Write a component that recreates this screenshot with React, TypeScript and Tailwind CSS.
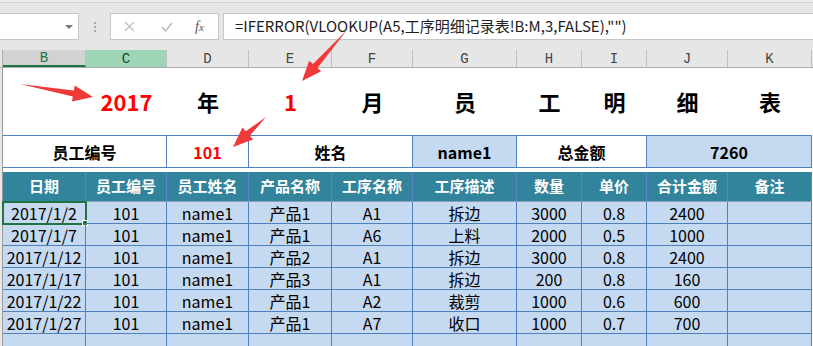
import type { FC } from 'react';

const cols = 'grid grid-cols-[83px_81px_82px_83px_81px_104px_65px_65px_81px_84px]';

const letters = ['B', 'C', 'D', 'E', 'F', 'G', 'H', 'I', 'J', 'K'];

const headers = ['日期', '员工编号', '员工姓名', '产品名称', '工序名称', '工序描述', '数量', '单价', '合计金额', '备注'];

const rows = [
  ['2017/1/2', '101', 'name1', '产品1', 'A1', '拆边', '3000', '0.8', '2400', ''],
  ['2017/1/7', '101', 'name1', '产品1', 'A6', '上料', '2000', '0.5', '1000', ''],
  ['2017/1/12', '101', 'name1', '产品2', 'A1', '拆边', '3000', '0.8', '2400', ''],
  ['2017/1/17', '101', 'name1', '产品3', 'A1', '拆边', '200', '0.8', '160', ''],
  ['2017/1/22', '101', 'name1', '产品1', 'A2', '裁剪', '1000', '0.6', '600', ''],
  ['2017/1/27', '101', 'name1', '产品1', 'A7', '收口', '1000', '0.7', '700', ''],
];

const title = [
  { t: '', red: false },
  { t: '2017', red: true },
  { t: '年', red: false },
  { t: '1', red: true },
  { t: '月', red: false },
  { t: '员', red: false },
  { t: '工', red: false },
  { t: '明', red: false },
  { t: '细', red: false },
  { t: '表', red: false },
];

// tapered arrow, like the ones a screenshot tool draws
const arrowPoints = (tx: number, ty: number, hx: number, hy: number) => {
  const len = Math.hypot(hx - tx, hy - ty);
  const dx = (hx - tx) / len;
  const dy = (hy - ty) / len;
  const nx = -dy;
  const ny = dx;
  const bx = hx - dx * 20;
  const by = hy - dy * 20;
  const pts = [
    [tx, ty],
    [bx + nx * 3, by + ny * 3],
    [bx + nx * 8, by + ny * 8],
    [hx, hy],
    [bx - nx * 8, by - ny * 8],
    [bx - nx * 3, by - ny * 3],
  ];
  return pts.map((p) => `${p[0].toFixed(1)},${p[1].toFixed(1)}`).join(' ');
};

const Arrows: FC = () => (
  <svg className="pointer-events-none absolute left-0 top-0" width={813} height={346}>
    <polygon points={arrowPoints(20, 84, 93, 97)} fill="#f03a3a" />
    <polygon points={arrowPoints(347, 30, 302, 81)} fill="#f03a3a" />
    <polygon points={arrowPoints(266, 117, 233, 147)} fill="#f03a3a" />
  </svg>
);

const Toolbar: FC = () => (
  <div className="h-[50px] bg-[#e6e6e6]">
    <div className="h-[3px] border-b border-[#d4d4d4] bg-[#ececec]" />
    <div className="flex pt-[10px]">
      <div className="relative h-[27px] w-[79px] border border-l-0 border-[#c6c6c6] bg-white">
        <div className="absolute left-[65px] top-[11px] h-0 w-0 border-x-[4px] border-t-[4px] border-x-transparent border-t-[#777]" />
      </div>
      <div className="flex w-[31px] flex-col items-center justify-center gap-[2px]">
        <div className="h-[2px] w-[2px] bg-[#a8a8a8]" />
        <div className="h-[2px] w-[2px] bg-[#a8a8a8]" />
        <div className="h-[2px] w-[2px] bg-[#a8a8a8]" />
      </div>
      <div className="flex h-[27px] w-[109px] items-center border border-[#c6c6c6] bg-white text-[#b8b8b8]">
        <svg className="ml-[13px]" width={11} height={11} viewBox="0 0 11 11">
          <path d="M1 1 L10 10 M10 1 L1 10" stroke="#bdbdbd" strokeWidth={1.3} fill="none" />
        </svg>
        <svg className="ml-[26px]" width={12} height={10} viewBox="0 0 12 10">
          <path d="M1 5 L4.5 9 L11 1" stroke="#bdbdbd" strokeWidth={1.6} fill="none" />
        </svg>
        <span className="ml-[22px] font-['Liberation_Serif',serif] text-[14px] italic leading-none text-[#555]">
          f<span className="text-[11px]">x</span>
        </span>
      </div>
      <div className="ml-[4px] flex h-[27px] flex-1 items-center border border-r-0 border-[#c6c6c6] bg-white pl-[11px] text-[15px] text-[#222]">
        =IFERROR(VLOOKUP(A5,工序明细记录表!B:M,3,FALSE),"")
      </div>
    </div>
  </div>
);

const ColumnHeader: FC = () => (
  <div className="flex h-[18px] border-b border-[#ababab] bg-[#e6e6e6]">
    <div className="w-[3px] border-r border-[#ababab]" />
    <div className={cols}>
      {letters.map((l) => {
        let tone = 'bg-[#e6e6e6] text-[#444]';
        if (l === 'B') tone = 'bg-[#d2d2d2] text-[#217346] border-b-2 border-b-[#217346]';
        if (l === 'C') tone = 'bg-[#9fd5b7] text-[#0e4d2a]';
        return (
          <div
            key={l}
            className={`flex items-center justify-center border-r border-[#c0c0c0] font-['Liberation_Mono',monospace] text-[14px] leading-none ${tone}`}
          >
            {l}
          </div>
        );
      })}
    </div>
  </div>
);

const App: FC = () => {
  return (
    <div className="relative h-[346px] w-[813px] overflow-hidden bg-white font-['Noto_Sans_CJK_SC',sans-serif]">
      <Toolbar />
      <ColumnHeader />
      <div className="flex">
        <div className="w-[3px] border-r border-[#9b9b9b] bg-[#e6e6e6]" />
        <div className="flex flex-col">
          {/* title row */}
          <div className={`${cols} h-[67px]`}>
            {title.map((c, i) => (
              <div
                key={i}
                className={`flex items-center justify-center text-[22px] font-bold ${c.red ? 'text-[#ff0000]' : 'text-black'}`}
              >
                {c.t}
              </div>
            ))}
          </div>

          {/* info row */}
          <div className={`${cols} h-[33px] border-y border-[#4f81bd] text-[16px] font-bold`}>
            <div className="col-span-2 flex items-center justify-center border-r border-[#4f81bd]">员工编号</div>
            <div className="flex items-center justify-center border-r border-[#4f81bd] text-[#ff0000]">101</div>
            <div className="col-span-2 flex items-center justify-center border-r border-[#4f81bd]">姓名</div>
            <div className="flex items-center justify-center border-r border-[#4f81bd] bg-[#c5d9f1]">name1</div>
            <div className="col-span-2 flex items-center justify-center border-r border-[#4f81bd]">总金额</div>
            <div className="col-span-2 flex items-center justify-center border-r border-[#4f81bd] bg-[#c5d9f1]">7260</div>
          </div>

          <div className="h-[4px]" />

          {/* table header */}
          <div className={`${cols} h-[30px] border-b border-[#8aa0b8] bg-[#31849b] text-[15px] font-bold text-white`}>
            {headers.map((h) => (
              <div key={h} className="flex items-center justify-center border-r border-[#5b86c3]">
                {h}
              </div>
            ))}
          </div>

          {/* data rows */}
          {rows.map((r, ri) => (
            <div key={ri} className={`${cols} h-[22px] bg-[#c5d9f1] text-[16px] text-black`}>
              {r.map((v, ci) => (
                <div
                  key={ci}
                  className="relative flex items-center justify-center border-r border-b border-[#4f81bd] leading-none"
                >
                  {v}
                  {ri === 0 && ci === 0 && (
                    <>
                      <div className="absolute -left-[1px] -top-[1px] h-[24px] w-[85px] border-2 border-[#217346]" />
                      <div className="absolute -bottom-[3px] -right-[3px] h-[6px] w-[6px] border border-white bg-[#217346]" />
                    </>
                  )}
                </div>
              ))}
            </div>
          ))}
          <div className={`${cols} h-[22px] bg-[#c5d9f1]`}>
            {letters.map((l) => (
              <div key={l} className="border-r border-b border-[#4f81bd]" />
            ))}
          </div>
        </div>
      </div>
      <Arrows />
    </div>
  );
};

export default App;
